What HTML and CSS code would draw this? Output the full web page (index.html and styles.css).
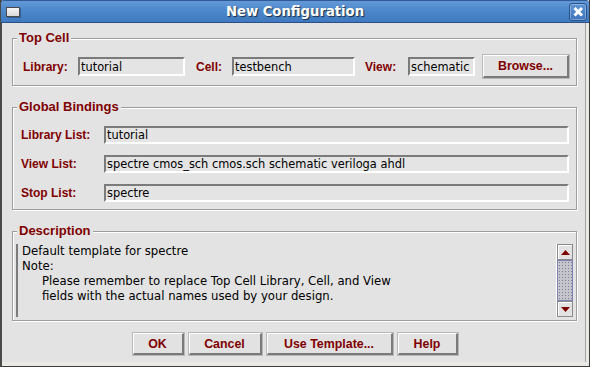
FILE: index.html
```html
<!DOCTYPE html>
<html>
<head>
<meta charset="utf-8">
<link rel="stylesheet" href="styles.css">
</head>
<body>
<div class="window">
  <div class="titlebar">
    <div class="tb-left"><span class="winicon"></span></div>
    <div class="title">New Configuration</div>
    <div class="tb-right">
      <span class="close"><svg width="16" height="16" viewBox="0 0 16 16"><path d="M4.5 4 L12 11.5 M12 4 L4.5 11.5" stroke="#fff" stroke-width="3" fill="none"/></svg></span>
    </div>
  </div>
  <div class="body">
    <fieldset class="group topcell">
      <legend>Top Cell</legend>
      <div class="row">
        <span class="lbl w-lib">Library:</span>
        <div class="field tf w-f1">tutorial</div>
        <span class="lbl w-cell">Cell:</span>
        <div class="field tf w-f2">testbench</div>
        <span class="lbl w-view">View:</span>
        <div class="field tf w-f3">schematic</div>
        <div class="btn browse">Browse...</div>
      </div>
    </fieldset>

    <fieldset class="group bindings">
      <legend>Global Bindings</legend>
      <div class="grid">
        <span class="lbl">Library List:</span>
        <div class="field">tutorial</div>
        <span class="lbl">View List:</span>
        <div class="field">spectre cmos_sch cmos.sch schematic veriloga ahdl</div>
        <span class="lbl">Stop List:</span>
        <div class="field">spectre</div>
      </div>
    </fieldset>

    <fieldset class="group desc">
      <legend>Description</legend>
      <div class="textarea">
        <div class="text">
          <div>Default template for spectre</div>
          <div>Note:</div>
          <div class="ind">Please remember to replace Top Cell Library, Cell, and View</div>
          <div class="ind">fields with the actual names used by your design.</div>
        </div>
        <div class="scrollbar">
          <div class="sbtn"><svg width="9" height="5" viewBox="0 0 9 5"><path d="M0 5 L4.5 0 L9 5 Z" fill="#800000"/></svg></div>
          <div class="thumb"></div>
          <div class="sbtn"><svg width="9" height="5" viewBox="0 0 9 5"><path d="M0 0 L9 0 L4.5 5 Z" fill="#800000"/></svg></div>
        </div>
      </div>
    </fieldset>

    <div class="buttons">
      <div class="btn b-ok">OK</div>
      <div class="btn b-cancel">Cancel</div>
      <div class="btn b-tmpl">Use Template...</div>
      <div class="btn b-help">Help</div>
    </div>
  </div>
</div>
</body>
</html>
```
FILE: styles.css
```css
* { box-sizing: border-box; }
html, body { margin: 0; padding: 0; }
body {
  width: 590px;
  height: 367px;
  overflow: hidden;
  background: #e3e3e3;
  font-family: "Liberation Sans", Arial, sans-serif;
}
.window {
  width: 590px;
  height: 367px;
  display: flex;
  flex-direction: column;
  background: #ebe9e5;
  border-left: 2px solid #4a4a4a;
  border-right: 1px solid #3c3c3c;
  border-bottom: 1px solid #3c3c3c;
}
.titlebar {
  height: 23px;
  flex: none;
  margin-left: -1px;
  display: grid;
  grid-template-columns: 1fr auto 1fr;
  align-items: center;
  background: linear-gradient(#6499d8 0%, #4d88cb 45%, #3f79bf 100%);
  border-top: 1px solid #2e5b96;
  border-bottom: 1px solid #2a5087;
  border-radius: 3px 3px 0 0;
}
.tb-left { display: flex; align-items: center; padding-left: 5px; }
.winicon {
  width: 14px;
  height: 10px;
  background: linear-gradient(#f4f4f4, #d8d8d8);
  border: 1px solid #4a4a4a;
  box-shadow: 1px 1px 0 rgba(20,40,80,0.4);
  margin-top: 1px;
}
.title {
  font-family: "DejaVu Sans", sans-serif;
  font-weight: bold;
  font-size: 13.2px;
  color: #fff;
  text-shadow: 1px 1px 1px rgba(0,0,0,0.65);
  line-height: 16px;
}
.tb-right { display: flex; justify-content: flex-end; padding-right: 2px; }
.close {
  width: 18px;
  height: 18px;
  border: 1px solid #28528c;
  border-radius: 3px;
  background: linear-gradient(#5e93d4, #3f76bc);
  box-shadow: inset 0 0 0 1px rgba(255,255,255,0.3);
  display: flex;
  align-items: center;
  justify-content: center;
}
.body {
  flex: 1;
  margin: 0 3px 4px 0;
  background: #e3e3e3;
  border-right: 1px solid #a4a4a4;
  display: flex;
  flex-direction: column;
}
.group {
  margin: 0 0 0 10px;
  width: 565px;
  min-width: 0;
  border: 1px solid #9c9c9c;
  box-shadow: 1px 1px 0 #fff, inset 1px 1px 0 #fff;
  padding: 0 7px 7px 8px;
}
.group legend {
  font: bold 13px/15px "Liberation Sans", Arial, sans-serif;
  color: #7f0000;
  padding: 0 2px 2px 2px;
  margin-left: -4px;
  background: #e3e3e3;
}
.topcell { margin-top: 7px; padding-top: 8px; }
.row {
  display: flex;
  align-items: center;
  height: 23px;
  padding-left: 2px;
}
.lbl {
  font: bold 12px/18px "Liberation Sans", Arial, sans-serif;
  color: #7f0000;
  white-space: nowrap;
}
.w-lib { width: 55px; }
.w-cell { width: 36px; margin-left: 11px; }
.w-view { width: 43px; margin-left: 10px; }
.field {
  height: 18px;
  background: #e4e4e4;
  border-style: solid;
  border-width: 2px;
  border-color: #7b7b7b #fff #fff #7b7b7b;
  font-family: "DejaVu Sans", sans-serif;
  font-size: 11.4px;
  line-height: 14px;
  color: #000;
  padding: 0 0 0 1px;
  white-space: nowrap;
  overflow: hidden;
}
.tf { height: 19px; padding-top: 1px; }
.w-f1 { width: 107px; }
.w-f2 { width: 123px; }
.w-f3 { width: 67px; }
.btn {
  height: 22px;
  display: flex;
  align-items: center;
  justify-content: center;
  font: bold 12.4px/16px "Liberation Sans", Arial, sans-serif;
  color: #7f0000;
  background: #e2e2e2;
  border-style: solid;
  border-width: 1px 2px 2px 1px;
  border-color: #fff #7a7a7a #7a7a7a #fff;
  box-shadow: 0 0 0 1px #b8b8b8;
}
.browse { width: 86px; height: 23px; margin-left: 8px; }
.bindings { margin-top: 13px; padding-top: 10px; }
.grid {
  display: grid;
  grid-template-columns: 83px 465px;
  grid-auto-rows: 18px;
  row-gap: 11px;
  align-items: center;
}
.desc { margin-top: 13px; padding: 4px 3px 3px 3px; }
.desc legend { margin-left: 1px; }
.textarea {
  height: 73px;
  display: flex;
  border-left: 2px solid #7b7b7b;
}
.text {
  flex: 1;
  padding-left: 4px;
  margin-top: 0;
  font-family: "DejaVu Sans", sans-serif;
  font-size: 11.7px;
  line-height: 15px;
  color: #000;
  white-space: nowrap;
}
.ind { padding-left: 20px; }
.scrollbar {
  width: 17px;
  border-left: 1px solid #fff;
  display: flex;
  flex-direction: column;
}
.sbtn {
  height: 16px;
  width: 16px;
  border: 1px solid #8a8a8a;
  box-shadow: inset 1px 1px 0 #fff;
  background: #e2e2e2;
  display: flex;
  align-items: center;
  justify-content: center;
}
.thumb {
  height: 41px;
  width: 16px;
  border: 1px solid #7f82b4;
  background-color: #c4c4cb;
  background-image: radial-gradient(circle, #7e7e9c 0.7px, transparent 0.9px);
  background-size: 3px 3px;
}
.buttons {
  margin-top: 12px;
  display: flex;
  justify-content: center;
  gap: 5px;
  padding-left: 3px;
}
.b-ok { width: 51px; }
.b-cancel { width: 73px; }
.b-tmpl { width: 126px; }
.b-help { width: 60px; }
```
